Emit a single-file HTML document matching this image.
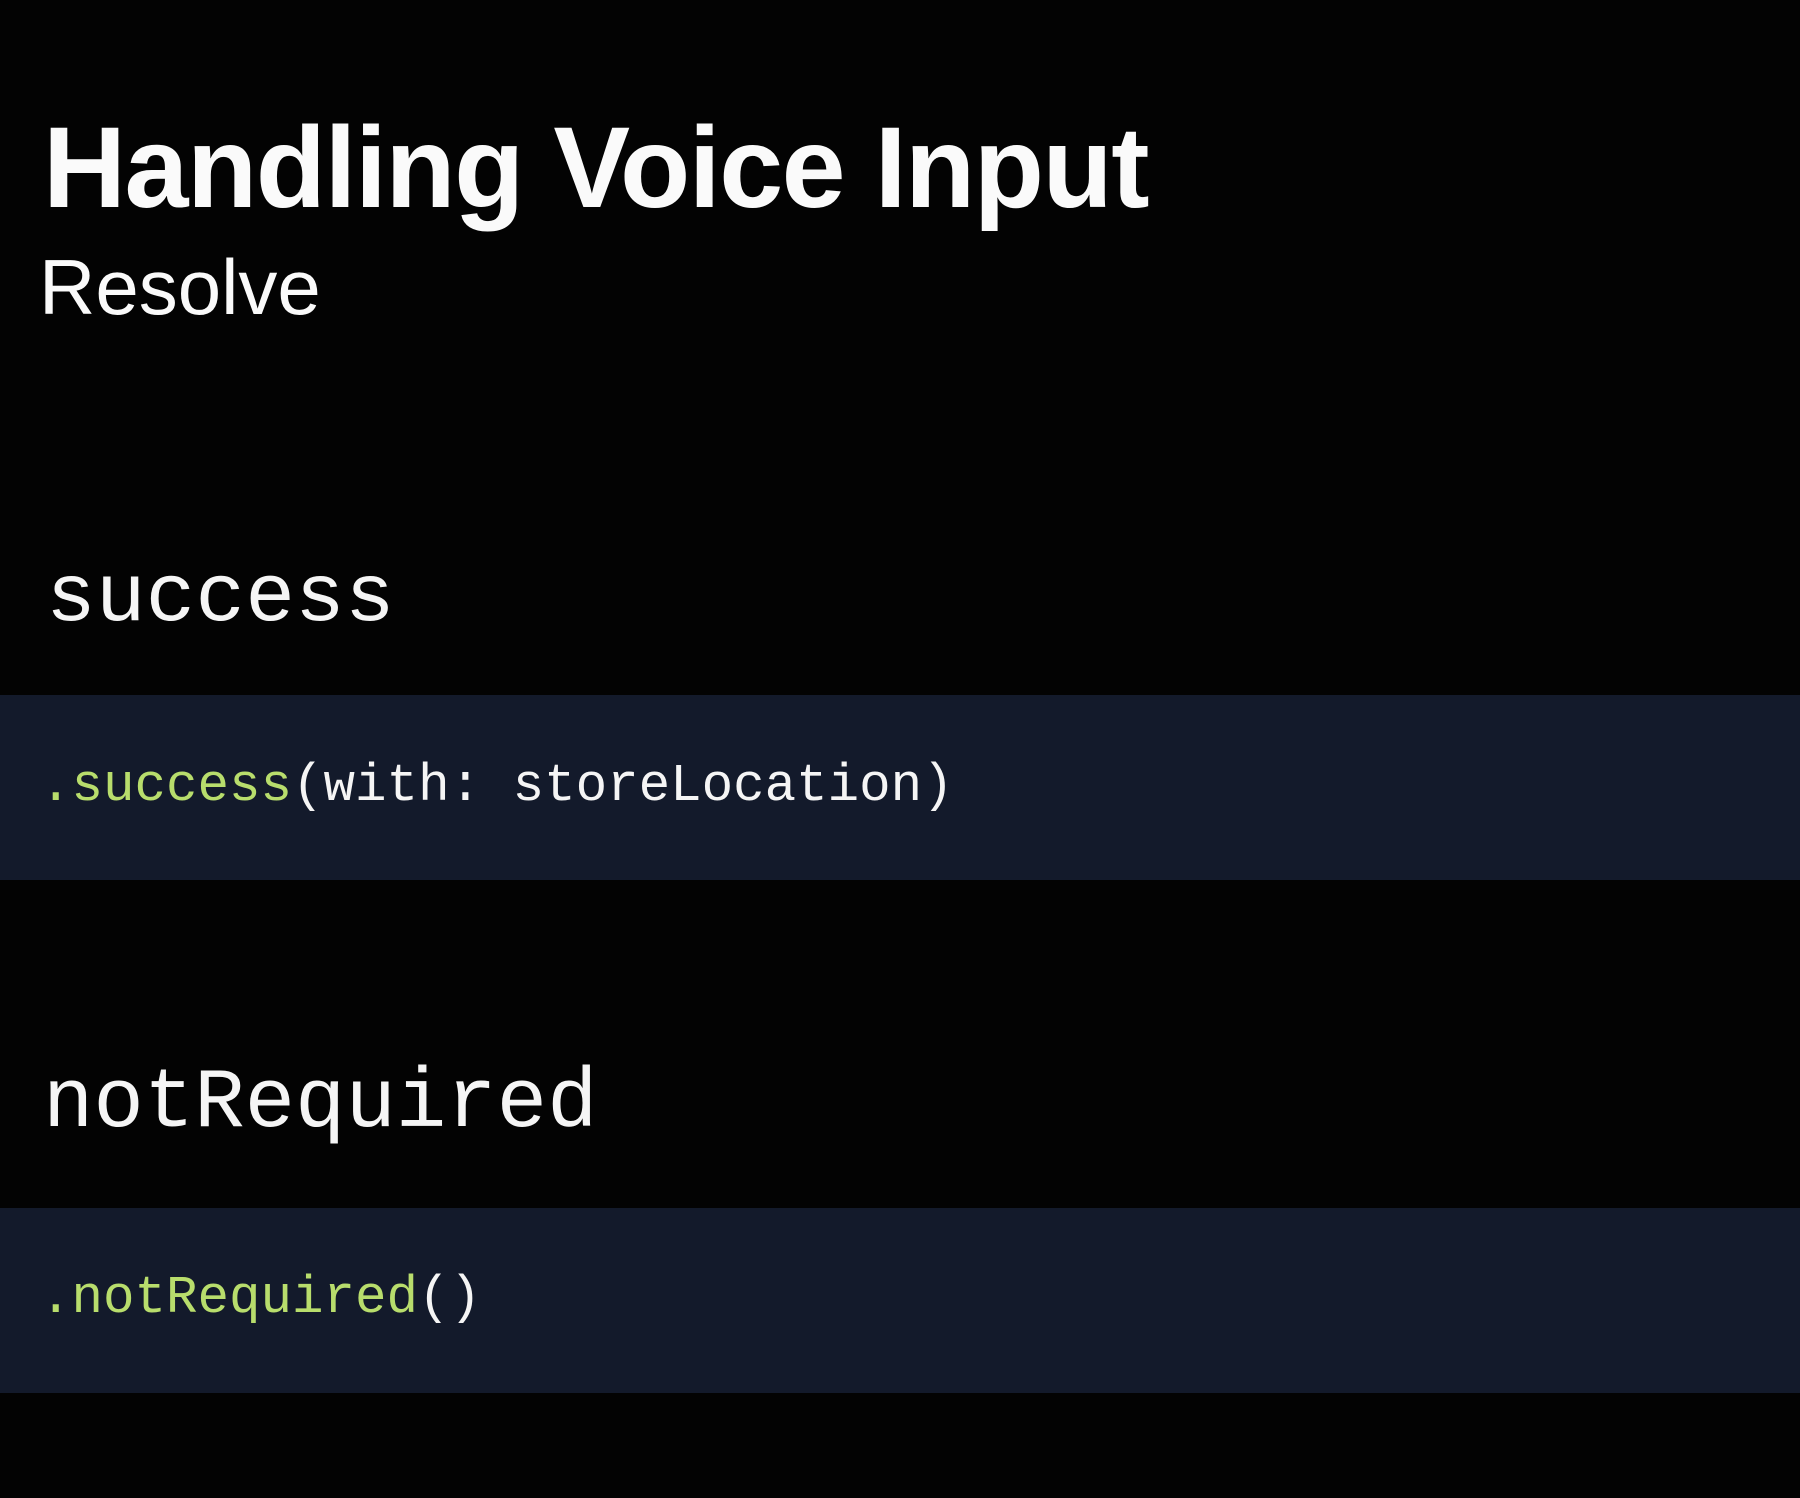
<!DOCTYPE html>
<html><head><meta charset="utf-8"><style>
html,body{margin:0;padding:0;background:#030303;width:1800px;height:1498px;overflow:hidden;position:relative}
div{position:absolute;white-space:pre;line-height:1}
.t{font-family:"Liberation Sans",sans-serif;color:#fafafa}
.m{font-family:"Liberation Mono",monospace;color:#f5f5f5}
.band{left:0;width:1800px;background:#131a2b}
.g{color:#b8dd6c}
</style></head><body>
<div class="t" style="left:43px;top:111px;font-size:115px;font-weight:bold;letter-spacing:-1.5px">Handling Voice Input</div>
<div class="t" style="left:39px;top:248px;font-size:78px">Resolve</div>
<div class="m" style="left:46px;top:557px;font-size:83px">success</div>
<div class="band" style="top:695px;height:185px"></div>
<div class="m" style="left:40px;top:760px;font-size:52.5px"><span class="g">.success</span>(with: storeLocation)</div>
<div class="m" style="left:43px;top:1063px;font-size:84px">notRequired</div>
<div class="band" style="top:1208px;height:185px"></div>
<div class="m" style="left:40px;top:1272px;font-size:52.5px"><span class="g">.notRequired</span>()</div>
</body></html>
